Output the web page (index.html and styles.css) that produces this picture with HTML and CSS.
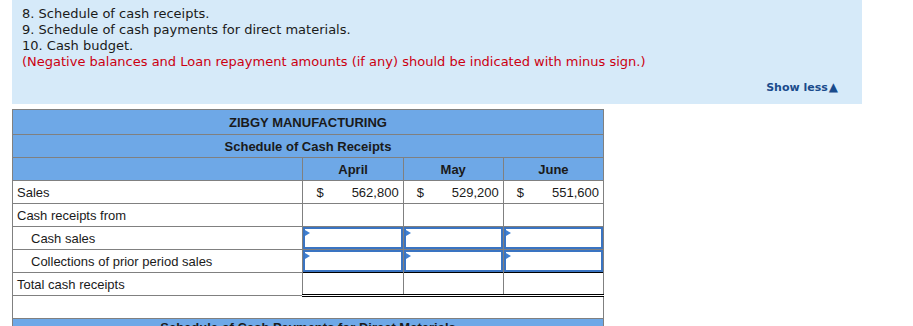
FILE: index.html
```html
<!DOCTYPE html>
<html>
<head>
<meta charset="utf-8">
<link rel="stylesheet" href="styles.css">
</head>
<body>
<div class="page">
  <div class="panel">
    <div class="line">8. Schedule of cash receipts.</div>
    <div class="line">9. Schedule of cash payments for direct materials.</div>
    <div class="line">10. Cash budget.</div>
    <div class="line note">(Negative balances and Loan repayment amounts (if any) should be indicated with minus sign.)</div>
    <div class="toggle"><a class="show-less">Show less<span class="tri">&#9650;</span></a></div>
  </div>

  <table class="sched">
    <colgroup>
      <col class="c-label">
      <col class="c-month">
      <col class="c-month">
      <col class="c-month">
    </colgroup>
    <tr class="head first"><td colspan="4">ZIBGY MANUFACTURING</td></tr>
    <tr class="head"><td colspan="4">Schedule of Cash Receipts</td></tr>
    <tr class="head months"><td></td><td>April</td><td>May</td><td>June</td></tr>
    <tr>
      <td class="label">Sales</td>
      <td class="money"><span>$</span><span>562,800</span></td>
      <td class="money"><span>$</span><span>529,200</span></td>
      <td class="money"><span>$</span><span>551,600</span></td>
    </tr>
    <tr>
      <td class="label">Cash receipts from</td>
      <td></td><td></td><td></td>
    </tr>
    <tr>
      <td class="label indent">Cash sales</td>
      <td class="input"><div class="box"></div></td>
      <td class="input"><div class="box"></div></td>
      <td class="input"><div class="box"></div></td>
    </tr>
    <tr class="last-input">
      <td class="label indent">Collections of prior period sales</td>
      <td class="input"><div class="box"></div></td>
      <td class="input"><div class="box"></div></td>
      <td class="input"><div class="box"></div></td>
    </tr>
    <tr class="total">
      <td class="label">Total cash receipts</td>
      <td class="sum"></td><td class="sum"></td><td class="sum"></td>
    </tr>
    <tr class="spacer"><td colspan="4"></td></tr>
    <tr class="head next"><td colspan="4">Schedule of Cash Payments for Direct Materials</td></tr>
  </table>
</div>
</body>
</html>
```

FILE: styles.css
```css
html, body {
  margin: 0;
  padding: 0;
  background: #ffffff;
}

.page {
  padding-left: 12px;
}

.panel {
  width: 850px;
  box-sizing: border-box;
  background: #d6eaf9;
  padding: 6px 24px 8px 10px;
  font-family: "DejaVu Sans", Verdana, sans-serif;
  font-size: 13px;
  line-height: 16px;
  color: #1a1a1a;
}

.note {
  color: #cc0011;
}

.toggle {
  margin-top: 9px;
  text-align: right;
}

.show-less {
  font-size: 11px;
  font-weight: bold;
  color: #1a4b8c;
}

.tri {
  font-size: 12px;
  margin-left: 1px;
}

.sched {
  margin-top: 5px;
  border-collapse: collapse;
  table-layout: fixed;
  width: 592px;
  font-family: "Liberation Sans", Arial, sans-serif;
  font-size: 13px;
  color: #1a1a1a;
}

.c-label { width: 290px; }
.c-month { width: 100px; }

.sched td {
  border: 1px solid #808080;
  height: 23px;
  padding: 0 4px;
  vertical-align: middle;
  box-sizing: border-box;
}

.head td {
  background: #6ea8e7;
  font-weight: bold;
  text-align: center;
  color: #1a1a1a;
}

.sched .first td {
  height: 25px;
}

.label.indent {
  padding-left: 18px;
}

.money span:first-child {
  float: left;
  padding-left: 9px;
}

.money {
  text-align: right;
  padding-right: 3px;
}

.sched td.input {
  padding: 0;
}

.last-input td.input {
  border-bottom: none;
}

.box {
  position: relative;
  height: 22px;
  box-sizing: border-box;
  border: 2px solid #3a74c2;
  background: #ffffff;
}

.box::before {
  content: "";
  position: absolute;
  left: 0;
  top: 1px;
  border-left: 5px solid #3f7fd0;
  border-top: 3px solid transparent;
  border-bottom: 3px solid transparent;
}

.sched td.sum {
  border-top: 1px solid #000000;
  border-bottom: 3px double #000000;
}

.sched .next td {
  vertical-align: top;
  padding-top: 1px;
  height: 30px;
}
```
